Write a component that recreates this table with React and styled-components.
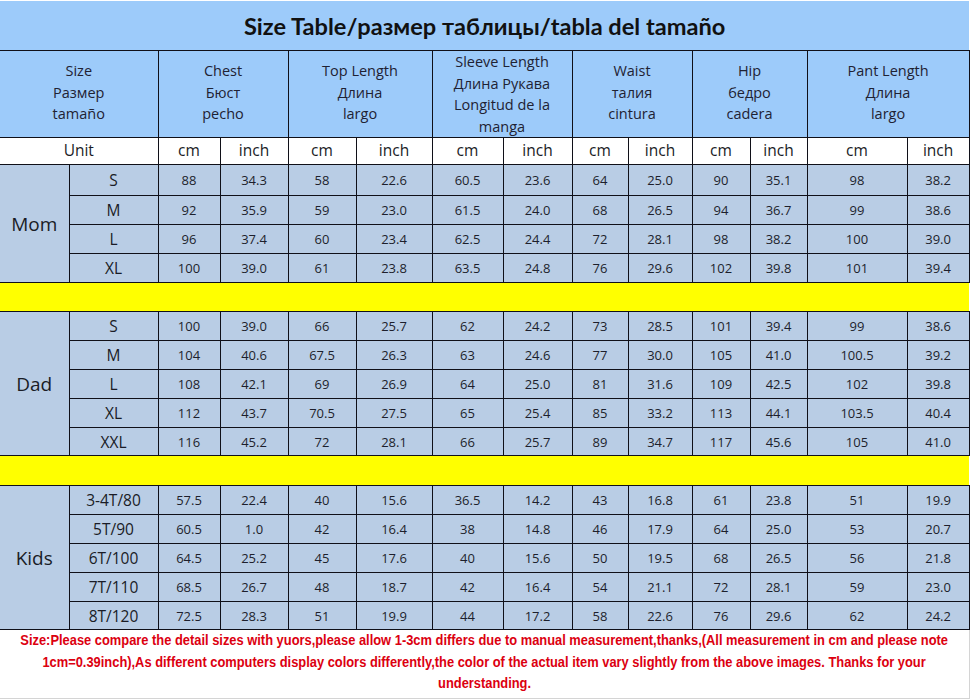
import React from "react";
import styled, { createGlobalStyle } from "styled-components";

const Global = createGlobalStyle`
  html, body { margin: 0; padding: 0; background: #ffffff; }
  body { font-family: "Open Sans", "Noto Sans", sans-serif; }
`;

const Page = styled.div`
  width: 971px;
  height: 700px;
  overflow: hidden;
  background: #ffffff;
  padding-top: 1px;
  box-sizing: border-box;
`;

const Sheet = styled.table`
  width: 969px;
  border-collapse: collapse;
  table-layout: fixed;
  color: #1d1f2c;
`;

const TitleCell = styled.td`
  height: 49px;
  padding: 0;
  background: #9dcbfa;
  border-bottom: 1px solid #101018;
  text-align: center;
  vertical-align: middle;
  font-family: "Lato", "Open Sans", sans-serif;
  font-weight: 700;
  font-size: 23.6px;
  color: #111111;
`;

const HeadCell = styled.td`
  height: ${(p) => (p.$lines > 3 ? 85 : 82)}px;
  padding: 0 0 ${(p) => (p.$lines > 3 ? 0 : 3)}px;
  background: #9dcbfa;
  border: 1px solid #101018;
  border-left: ${(p) => (p.$first ? "none" : "1px solid #101018")};
  text-align: center;
  vertical-align: middle;
  font-size: 14.5px;
  line-height: 21.5px;
  color: #1f2233;
`;

const UnitCell = styled.td`
  height: 24px;
  padding: 0 0 2px;
  background: #ffffff;
  border: 1px solid #101018;
  border-left: ${(p) => (p.$first ? "none" : "1px solid #101018")};
  text-align: center;
  vertical-align: middle;
  font-size: 15.5px;
  color: #1a1c26;
`;

const GroupCell = styled.td`
  padding: 0;
  background: #b9cde5;
  border: 1px solid #101018;
  border-left: none;
  text-align: center;
  vertical-align: middle;
  font-size: 19px;
  color: #1a1c26;
`;

const SizeCell = styled.td`
  padding: 0;
  background: #b9cde5;
  border: 1px solid #101018;
  text-align: center;
  vertical-align: middle;
  font-size: 15.5px;
  color: #1a1c26;
`;

const ValueCell = styled.td`
  padding: 0;
  background: #b9cde5;
  border: 1px solid #101018;
  text-align: center;
  vertical-align: middle;
  font-size: 13px;
  color: #1d1f2c;
`;

const DataRow = styled.tr`
  height: ${(p) => p.$h}px;
`;

const YellowCell = styled.td`
  height: ${(p) => p.$h}px;
  padding: 0;
  background: #ffff00;
  border-top: 1px solid #101018;
  border-bottom: 1px solid #101018;
`;

const NoteCell = styled.td`
  height: 68px;
  padding: 0;
  background: #ffffff;
  border-right: 1px solid #d4d4d4;
  border-bottom: 1px solid #d4d4d4;
  text-align: center;
  vertical-align: top;
`;

const NoteText = styled.div`
  display: flex;
  flex-direction: column;
  align-items: center;
  font-family: "Liberation Sans", Arial, sans-serif;
  font-weight: 700;
  font-size: 14px;
  line-height: 21.5px;
  color: #dc0010;
`;

const NoteLine = styled.span`
  display: block;
  white-space: nowrap;
  transform: scaleX(0.92);
`;

const widths = [69, 89, 62, 68, 68, 76, 71, 69, 56, 64, 58, 57, 100, 62];

const headers = [
  ["Chest", "Бюст", "pecho"],
  ["Top Length", "Длина", "largo"],
  ["Sleeve Length", "Длина Рукава", "Longitud de la", "manga"],
  ["Waist", "талия", "cintura"],
  ["Hip", "бедро", "cadera"],
  ["Pant Length", "Длина", "largo"],
];

const groups = [
  {
    name: "Mom",
    heights: [31, 29, 29, 29],
    rows: [
      ["S", "88", "34.3", "58", "22.6", "60.5", "23.6", "64", "25.0", "90", "35.1", "98", "38.2"],
      ["M", "92", "35.9", "59", "23.0", "61.5", "24.0", "68", "26.5", "94", "36.7", "99", "38.6"],
      ["L", "96", "37.4", "60", "23.4", "62.5", "24.4", "72", "28.1", "98", "38.2", "100", "39.0"],
      ["XL", "100", "39.0", "61", "23.8", "63.5", "24.8", "76", "29.6", "102", "39.8", "101", "39.4"],
    ],
    gap: 28,
  },
  {
    name: "Dad",
    heights: [29, 29, 29, 29, 28],
    rows: [
      ["S", "100", "39.0", "66", "25.7", "62", "24.2", "73", "28.5", "101", "39.4", "99", "38.6"],
      ["M", "104", "40.6", "67.5", "26.3", "63", "24.6", "77", "30.0", "105", "41.0", "100.5", "39.2"],
      ["L", "108", "42.1", "69", "26.9", "64", "25.0", "81", "31.6", "109", "42.5", "102", "39.8"],
      ["XL", "112", "43.7", "70.5", "27.5", "65", "25.4", "85", "33.2", "113", "44.1", "103.5", "40.4"],
      ["XXL", "116", "45.2", "72", "28.1", "66", "25.7", "89", "34.7", "117", "45.6", "105", "41.0"],
    ],
    gap: 29,
  },
  {
    name: "Kids",
    heights: [29, 29, 29, 29, 28],
    rows: [
      ["3-4T/80", "57.5", "22.4", "40", "15.6", "36.5", "14.2", "43", "16.8", "61", "23.8", "51", "19.9"],
      ["5T/90", "60.5", "1.0", "42", "16.4", "38", "14.8", "46", "17.9", "64", "25.0", "53", "20.7"],
      ["6T/100", "64.5", "25.2", "45", "17.6", "40", "15.6", "50", "19.5", "68", "26.5", "56", "21.8"],
      ["7T/110", "68.5", "26.7", "48", "18.7", "42", "16.4", "54", "21.1", "72", "28.1", "59", "23.0"],
      ["8T/120", "72.5", "28.3", "51", "19.9", "44", "17.2", "58", "22.6", "76", "29.6", "62", "24.2"],
    ],
    gap: 0,
  },
];

function Lines({ items }) {
  return items.map((t, i) => (
    <React.Fragment key={i}>
      {i > 0 && <br />}
      {t}
    </React.Fragment>
  ));
}

export default function App() {
  return (
    <Page>
      <Global />
      <Sheet>
        <colgroup>
          {widths.map((w, i) => (
            <col key={i} style={{ width: w }} />
          ))}
        </colgroup>
        <tbody>
          <tr>
            <TitleCell colSpan={14}>Size Table/размер таблицы/tabla del tamaño</TitleCell>
          </tr>
          <tr>
            <HeadCell colSpan={2} $first $lines={3}>
              <Lines items={["Size", "Размер", "tamaño"]} />
            </HeadCell>
            {headers.map((h, i) => (
              <HeadCell key={i} colSpan={2} $lines={h.length}>
                <Lines items={h} />
              </HeadCell>
            ))}
          </tr>
          <tr>
            <UnitCell colSpan={2} $first>Unit</UnitCell>
            {headers.map((_, i) => (
              <React.Fragment key={i}>
                <UnitCell>cm</UnitCell>
                <UnitCell>inch</UnitCell>
              </React.Fragment>
            ))}
          </tr>
          {groups.map((g) => (
            <React.Fragment key={g.name}>
              {g.rows.map((r, ri) => (
                <DataRow key={ri} $h={g.heights[ri]}>
                  {ri === 0 && <GroupCell rowSpan={g.rows.length}>{g.name}</GroupCell>}
                  <SizeCell>{r[0]}</SizeCell>
                  {r.slice(1).map((v, vi) => (
                    <ValueCell key={vi}>{v}</ValueCell>
                  ))}
                </DataRow>
              ))}
              {g.gap > 0 && (
                <tr>
                  <YellowCell colSpan={14} $h={g.gap} />
                </tr>
              )}
            </React.Fragment>
          ))}
          <tr>
            <NoteCell colSpan={14}>
              <NoteText>
                <NoteLine>
                  Size:Please compare the detail sizes with yuors,please allow 1-3cm differs due to manual measurement,thanks,(All measurement in cm and please note
                </NoteLine>
                <NoteLine>
                  1cm=0.39inch),As different computers display colors differently,the color of the actual item vary slightly from the above images. Thanks for your
                </NoteLine>
                <NoteLine>understanding.</NoteLine>
              </NoteText>
            </NoteCell>
          </tr>
        </tbody>
      </Sheet>
    </Page>
  );
}
